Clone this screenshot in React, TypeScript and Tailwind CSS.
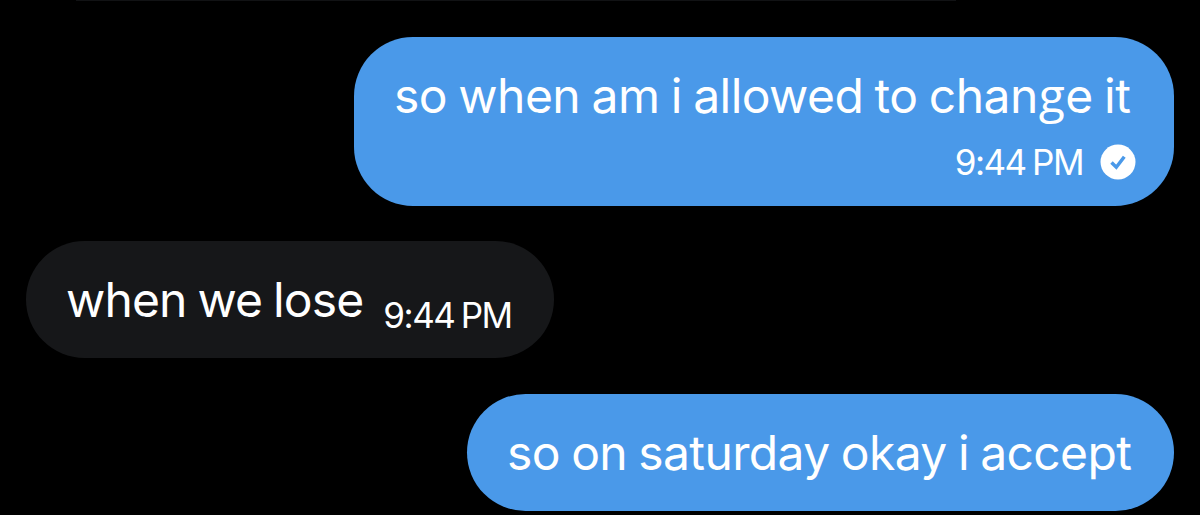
const messageText = "font-['Inter','Open_Sans',sans-serif] text-[48px] leading-[70px] whitespace-nowrap";
const timeText = "font-['Inter','Open_Sans',sans-serif] text-[35px] tracking-[-1.5px] whitespace-nowrap [word-spacing:-2px]";

export default function App() {
  return (
    <main className="flex h-[515px] w-[1200px] flex-col overflow-hidden bg-black text-white">
      {/* bottom edge of the previous message */}
      <div className="ml-[76px] h-px w-[880px] shrink-0 bg-[#111214]" />

      <section className="mt-9 flex flex-col px-[26px]">
        <div className="flex h-[169px] w-[820px] flex-col self-end rounded-[59px] bg-[#4a99e9] pt-6 pr-[38px] pl-10">
          <p className={`${messageText} tracking-[-0.55px] [word-spacing:-1.6px]`}>
            so when am i allowed to chan<span className="mx-px font-['Open_Sans',sans-serif] leading-none">g</span>e it
          </p>
          <div className="mt-px flex items-center justify-end gap-[17px]">
            <span className={`${timeText} leading-[60px]`}>9:44 PM</span>
            <svg className="size-[36px]" viewBox="0 0 36 36" fill="none">
              <circle cx="18" cy="18" r="17.5" fill="white" />
              <path d="M11.5 18.5l4.8 4.7 8-10.5" stroke="#4a99e9" strokeWidth="3.5" />
            </svg>
          </div>
        </div>

        <div className="mt-[35px] flex h-[117px] w-[528px] self-start rounded-full bg-[#161719] pt-6 pl-10">
          <p className={`${messageText} tracking-[-0.85px] [word-spacing:-1.8px]`}>when we lose</p>
          <span className={`${timeText} mt-[15px] ml-5 leading-[70px]`}>9:44 PM</span>
        </div>

        <div className="mt-9 flex h-[117px] w-[707px] self-end rounded-full bg-[#4a99e9] pt-6 pl-10">
          <p className={`${messageText} tracking-[-0.63px] [word-spacing:-1.6px]`}>so on saturday okay i accept</p>
        </div>
      </section>
    </main>
  );
}
